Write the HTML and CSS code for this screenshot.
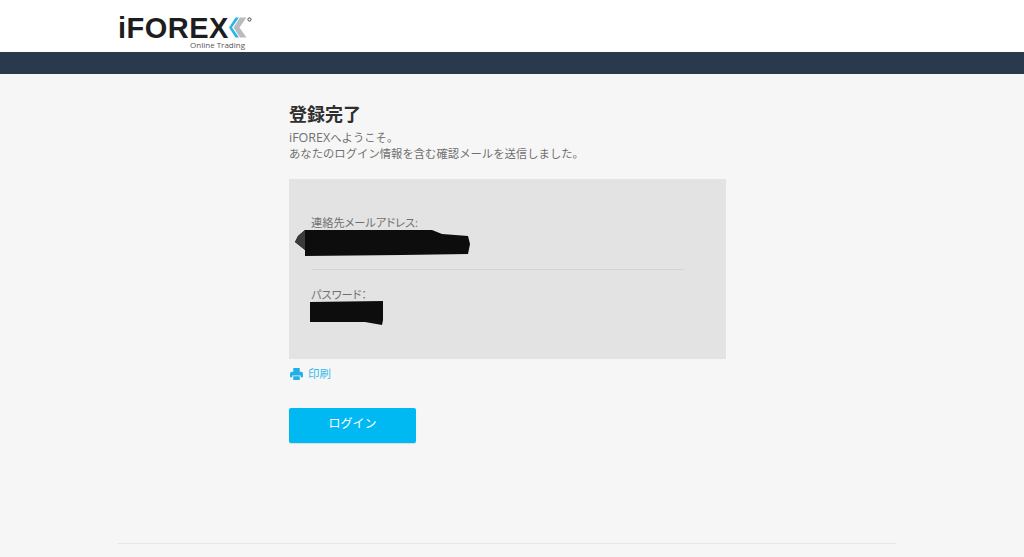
FILE: index.html
```html
<!DOCTYPE html>
<html lang="ja">
<head>
<meta charset="utf-8">
<title>iFOREX 登録完了</title>
<link rel="stylesheet" href="styles.css">
</head>
<body>
<header class="header">
  <div class="logo">
    <div class="logo-top">
      <span class="logo-word">iFOREX</span>
      <svg class="logo-mark" width="24" height="24" viewBox="0 0 24 24">
        <path d="M7.500 1.500h3.500L4 11.500l7 10H7.500L1 11.500z" fill="#29b6e8"/>
        <path d="M12 1.500h6.500l-7 10 7 10H12L5.500 11.500z" fill="#b9bcbe"/>
        <circle cx="21.500" cy="3.500" r="1.600" fill="none" stroke="#444" stroke-width="1"/>
      </svg>
    </div>
    <div class="logo-sub">Online Trading</div>
  </div>
</header>
<div class="band"></div>
<main class="main">
  <h1 class="title">登録完了</h1>
  <p class="intro"><span class="brand">iFOREX</span>へようこそ。<br>あなたのログイン情報を含む確認メールを送信しました。</p>
  <section class="panel">
    <div class="field field-email">
      <div class="label">連絡先メールアドレス:</div>
      <svg class="redact-email" width="176" height="27" viewBox="0 0 176 27">
        <path d="M10 0L137 0L147 4L173 6L175 14L173 24L107 25L10 26L10 20L0 12L3 6z" fill="#0d0d0d"/>
        <path d="M10 0L3 6L0 12L10 20z" fill="#3a3a3a"/>
      </svg>
    </div>
    <div class="divider"></div>
    <div class="field field-pass">
      <div class="label">パスワード：</div>
      <svg class="redact-pass" width="74" height="26" viewBox="0 0 74 26">
        <path d="M0 2L73 1L73 20L72 25L55 22L0 22z" fill="#0d0d0d"/>
      </svg>
    </div>
  </section>
  <a class="print" href="#">
    <svg class="print-icon" width="13" height="12" viewBox="0 0 14 13">
      <path d="M3.500 0h7v4h-7zM0 6a2 2 0 0 1 2-2h10a2 2 0 0 1 2 2v4h-2.500V8h-9v2H0zM3.500 9h7v4h-7z" fill="#1fb0e6"/>
    </svg>
    <span>印刷</span>
  </a>
  <a class="login" href="#">ログイン</a>
</main>
<footer class="footer"></footer>
</body>
</html>
```
FILE: styles.css
```css
html, body {
  margin: 0;
  padding: 0;
}
body {
  height: 557px;
  overflow: hidden;
  background: #f6f6f6;
  font-family: "Open Sans", "Noto Sans CJK JP", sans-serif;
  color: #666;
  display: flex;
  flex-direction: column;
}
.header {
  height: 52px;
  background: #fff;
  padding-left: 118px;
  flex: none;
}
.logo {
  width: 132px;
  padding-top: 16px;
}
.logo-top {
  display: flex;
  align-items: flex-start;
  height: 24px;
}
.logo-word {
  font-family: "Liberation Sans", sans-serif;
  font-weight: 700;
  font-size: 29px;
  line-height: 25px;
  letter-spacing: 0.500px;
  color: #1d1d1f;
}
.logo-mark {
  margin-left: -1px;
  flex: none;
}
.logo-sub {
  font-family: "Open Sans", sans-serif;
  font-size: 8px;
  line-height: 10px;
  font-weight: 400;
  color: #555;
  text-align: right;
  padding-right: 5px;
}
.band {
  height: 22px;
  background: #2a3a4c;
  flex: none;
}
.main {
  flex: 1;
  width: 437px;
  margin-left: 289px;
  padding-top: 28px;
  box-sizing: border-box;
}
.title {
  margin: 0;
  font-size: 18px;
  line-height: 24px;
  font-weight: 700;
  color: #2f2f2f;
}
.intro {
  margin: 4px 0 0;
  font-size: 11.350px;
  line-height: 16px;
  color: #707070;
}
.brand {
  font-size: 12.500px;
}
.panel {
  margin-top: 17px;
  height: 180px;
  background: #e3e3e3;
  box-sizing: border-box;
  padding: 36px 42px 0 22px;
}
.label {
  font-size: 11.200px;
  line-height: 15px;
  color: #707070;
  font-feature-settings: "palt";
}
.field-email {
  height: 54px;
}
.redact-email {
  display: block;
  margin: 0 0 0 -16px;
}
.divider {
  height: 1px;
  margin-left: 1px;
  background: #d3d3d3;
}
.field-pass {
  padding-top: 17px;
}
.redact-pass {
  display: block;
  margin: -2px 0 0 -1px;
}
.print {
  display: flex;
  align-items: center;
  gap: 5px;
  margin-top: 5px;
  height: 18px;
  padding-left: 1px;
  color: #38bdea;
  font-size: 11.500px;
  text-decoration: none;
}
.print-icon {
  margin-top: 2px;
}
.login {
  display: block;
  width: 127px;
  height: 35px;
  margin-top: 26px;
  background: #00b9f2;
  border-radius: 2px;
  box-shadow: 0 1px 1px rgba(0, 0, 0, 0.12);
  color: #fff;
  font-size: 12px;
  font-weight: 400;
  line-height: 31px;
  text-align: center;
  text-decoration: none;
}
.footer {
  flex: none;
  height: 13px;
  margin: 0 128px 0 118px;
  border-top: 1px solid #e6e6e6;
}
```
